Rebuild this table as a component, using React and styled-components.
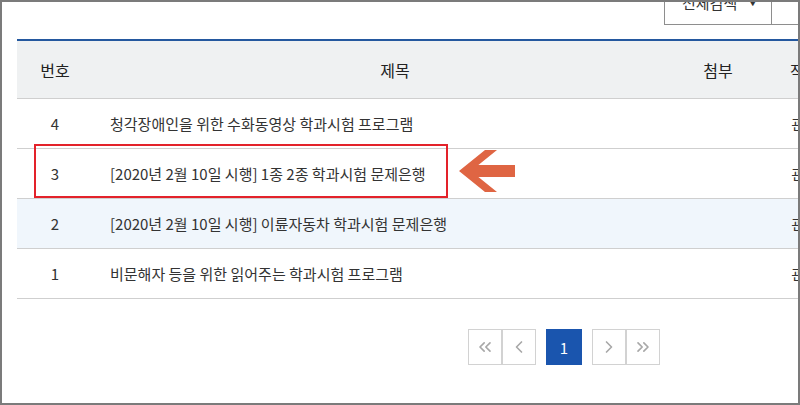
import React from 'react';
import styled, { createGlobalStyle } from 'styled-components';
import { ChevronLeft, ChevronRight, ChevronsLeft, ChevronsRight } from 'lucide-react';

const GlobalStyle = createGlobalStyle`
  html, body { margin: 0; padding: 0; background: #fff; }
  body { font-family: "Noto Sans CJK KR", "Noto Sans", sans-serif; color: #333; }
`;

const Frame = styled.div`
  position: relative;
  width: 800px; height: 405px;
  box-sizing: border-box;
  border: 2px solid #7b7b7b;
  overflow: hidden;
  background: #fff;
`;

const Page = styled.div`
  width: 1109px;
  padding-left: 15px;
  box-sizing: border-box;
`;

const Toolbar = styled.div`
  display: flex;
  margin-top: -22px;
  padding-left: 647px;
`;
const Select = styled.div`
  width: 108px; height: 45px;
  box-sizing: border-box;
  border: 1px solid #8e8e8e;
  display: flex; align-items: center;
  padding: 0 0 0 17px;
  font-size: 15px; color: #333;
  span { margin-left: 11px; font-size: 9px; }
`;
const Input = styled.div`
  width: 220px; height: 45px;
  box-sizing: border-box;
  border: 1px solid #8e8e8e;
  border-left: none;
`;

const Table = styled.table`
  width: 1094px;
  margin-top: 14px;
  table-layout: fixed;
  border-collapse: collapse;
  border-top: 2px solid #24589f;
  th {
    height: 57px; padding: 0;
    background: #eff1f2;
    border-bottom: 1px solid #cfcfcf;
    font-size: 16px; font-weight: 400; color: #222;
  }
`;
const Row = styled.tr`
  background: ${p => (p.$highlight ? '#f0f6fc' : '#fff')};
  td {
    height: 49px; padding: 0;
    border-bottom: 1px solid #cfcfcf;
    font-size: 15px; color: #333;
    text-align: center;
    white-space: nowrap;
  }
  td.title {
    text-align: left;
    padding-left: 17px;
  }
`;

const Pager = styled.nav`
  display: flex; justify-content: center; gap: 10px;
  width: 1094px;
  margin-top: 30px;
`;
const PagerGroup = styled.div`
  display: flex;
  & > * + * { border-left: none; }
`;
const PageBtn = styled.a`
  width: ${p => (p.$active ? '36px' : '34px')}; height: 36px;
  box-sizing: border-box;
  display: flex; align-items: center; justify-content: center;
  border: ${p => (p.$active ? 'none' : '1px solid #d2d2d2')};
  background: ${p => (p.$active ? '#1a55ae' : '#fff')};
  color: ${p => (p.$active ? '#fff' : '#a8a8a8')};
  font-size: 15px;
`;

const Highlight = styled.div`
  position: absolute;
  left: 32px; top: 142px;
  width: 414px; height: 54px;
  box-sizing: border-box;
  border: 2px solid #e3222a;
  pointer-events: none;
`;
const Pointer = styled.svg`
  position: absolute;
  left: 457px; top: 148px;
`;

const rows = [
  { no: 4, title: '청각장애인을 위한 수화동영상 학과시험 프로그램' },
  { no: 3, title: '[2020년 2월 10일 시행] 1종 2종 학과시험 문제은행' },
  { no: 2, title: '[2020년 2월 10일 시행] 이륜자동차 학과시험 문제은행', highlight: true },
  { no: 1, title: '비문해자 등을 위한 읽어주는 학과시험 프로그램' },
];

const App = () => (
  <Frame>
    <GlobalStyle />
    <Page>
      <Toolbar>
        <Select>전체검색<span>▼</span></Select>
        <Input />
      </Toolbar>

      <Table>
        <colgroup>
          <col style={{ width: 76 }} />
          <col style={{ width: 604 }} />
          <col style={{ width: 42 }} />
          <col style={{ width: 146 }} />
          <col style={{ width: 130 }} />
          <col />
        </colgroup>
        <thead>
          <tr>
            <th>번호</th>
            <th>제목</th>
            <th>첨부</th>
            <th>작성자</th>
            <th>등록일</th>
            <th>조회</th>
          </tr>
        </thead>
        <tbody>
          {rows.map(r => (
            <Row key={r.no} $highlight={r.highlight}>
              <td>{r.no}</td>
              <td className="title">{r.title}</td>
              <td></td>
              <td>관리자</td>
              <td>2020-02-10</td>
              <td>1024</td>
            </Row>
          ))}
        </tbody>
      </Table>

      <Pager>
        <PagerGroup>
          <PageBtn><ChevronsLeft size={20} strokeWidth={2} /></PageBtn>
          <PageBtn><ChevronLeft size={20} strokeWidth={2} /></PageBtn>
        </PagerGroup>
        <PageBtn $active>1</PageBtn>
        <PagerGroup>
          <PageBtn><ChevronRight size={20} strokeWidth={2} /></PageBtn>
          <PageBtn><ChevronsRight size={20} strokeWidth={2} /></PageBtn>
        </PagerGroup>
      </Pager>
    </Page>

    <Highlight />
    <Pointer width="56" height="42" viewBox="0 0 56 42">
      <polygon
        fill="#df6543"
        points="0,21 26,0 38,0 19.4,15 56,15 56,27 19.4,27 38,42 26,42"
      />
    </Pointer>
  </Frame>
);

export default App;
